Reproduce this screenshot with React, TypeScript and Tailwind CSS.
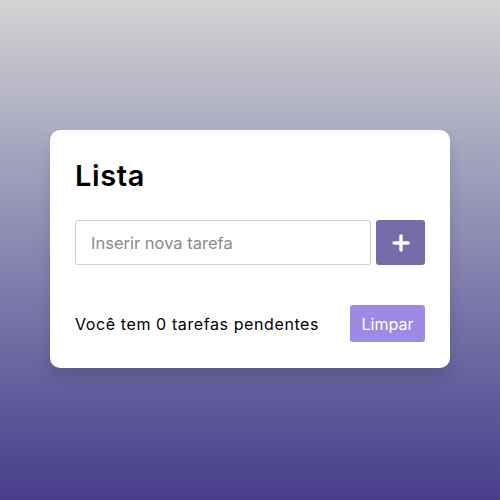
import React, { useState } from 'react';

const App: React.FC = () => {
  const [task, setTask] = useState('');

  return (
    <div
      className="w-[500px] h-[500px] flex items-center justify-center bg-linear-to-b from-[#d3d3d3] to-[#483d8b]"
      style={{ fontFamily: 'Inter, "Open Sans", sans-serif' }}
    >
      <div className="w-[400px] -mt-[2px] bg-white rounded-[10px] px-[25px] pt-[28px] pb-[26px] shadow-[0_10px_15px_rgba(0,0,0,0.12)]">
        <h1 className="text-[29px] font-semibold leading-[36px] text-black tracking-[0.6px]">Lista</h1>

        <div className="flex gap-[5px] mt-[26px]">
          <input
            type="text"
            value={task}
            onChange={(e) => setTask(e.target.value)}
            placeholder="Inserir nova tarefa"
            className="flex-1 h-[45px] border border-[#cfcfcf] rounded-[3px] px-[15px] text-[16.5px] text-black placeholder:text-[#8a8a8a] outline-none"
          />
          <button className="w-[50px] h-[45px] rounded-[3px] bg-[#786ba9] flex items-center justify-center">
            <svg width="18" height="18" viewBox="0 0 18 18">
              <path d="M9 2v14M2 9h14" stroke="white" strokeWidth="3.4" strokeLinecap="round" />
            </svg>
          </button>
        </div>

        <div className="flex items-center justify-between mt-[40px]">
          <span className="text-[16px] text-black tracking-[0.6px]">Você tem 0 tarefas pendentes</span>
          <button className="w-[75px] h-[37px] rounded-[3px] bg-[#9e8ae6] text-white text-[16px]">Limpar</button>
        </div>
      </div>
    </div>
  );
};

export default App;
